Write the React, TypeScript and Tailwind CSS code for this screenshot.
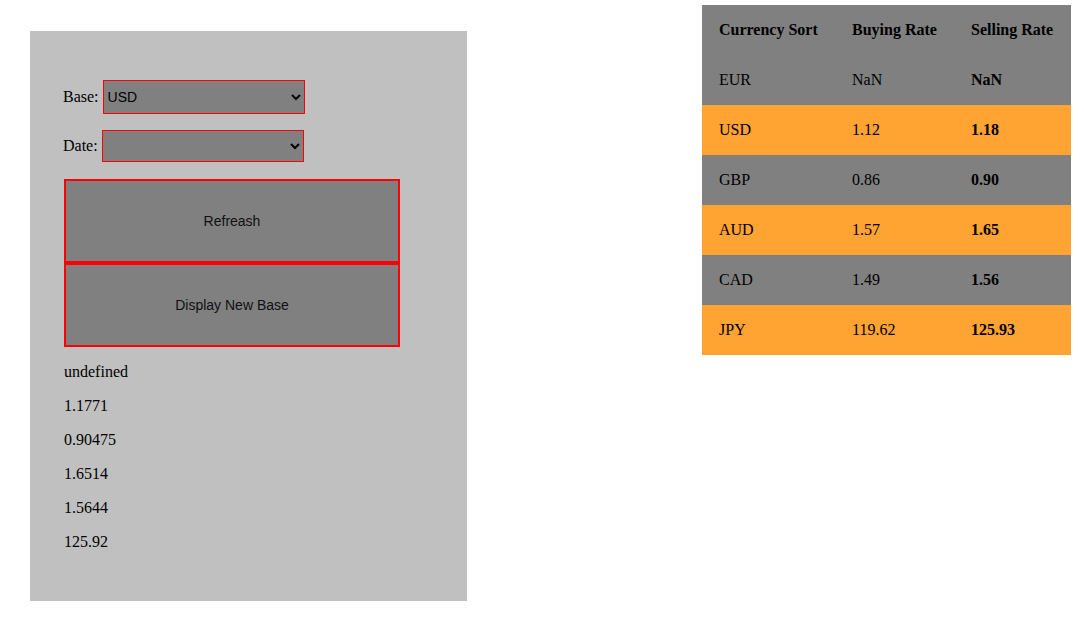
const rows = [
  { code: "EUR", buy: "NaN", sell: "NaN" },
  { code: "USD", buy: "1.12", sell: "1.18" },
  { code: "GBP", buy: "0.86", sell: "0.90" },
  { code: "AUD", buy: "1.57", sell: "1.65" },
  { code: "CAD", buy: "1.49", sell: "1.56" },
  { code: "JPY", buy: "119.62", sell: "125.93" },
];

const rates = ["undefined", "1.1771", "0.90475", "1.6514", "1.5644", "125.92"];

export default function App() {
  return (
    <div className="flex items-start w-[1084px] h-[626px] bg-white text-black text-[16px] font-['Liberation_Serif',serif]">
      {/* Converter panel */}
      <div className="ml-[30px] mt-[31px] w-[437px] h-[570px] bg-[#c0c0c0] pl-[33px] pt-[49px]">
        <div className="flex items-center h-[34px]">
          <span className="mr-[4px]">Base:</span>
          <select
            defaultValue="USD"
            className="w-[202px] h-[34px] bg-[#808080] border border-[#ff0000] text-[14px] text-black font-['Liberation_Sans',sans-serif]"
          >
            <option>USD</option>
            <option>EUR</option>
          </select>
        </div>
        <div className="flex items-center h-[32px] mt-[16px]">
          <span className="mr-[4px]">Date:</span>
          <select className="w-[202px] h-[32px] bg-[#808080] border border-[#ff0000] text-[14px] font-['Liberation_Sans',sans-serif]">
            <option></option>
          </select>
        </div>

        <div className="flex flex-col mt-[17px] ml-[1px] w-[336px]">
          <button className="h-[84px] bg-[#808080] border-2 border-[#ff0000] text-[14px] text-[#111] font-['Liberation_Sans',sans-serif]">
            Refreash
          </button>
          <button className="h-[84px] bg-[#808080] border-2 border-[#ff0000] text-[14px] text-[#111] font-['Liberation_Sans',sans-serif]">
            Display New Base
          </button>
        </div>

        <div className="ml-[1px] mt-[16px]">
          {rates.map((r) => (
            <p key={r} className="mb-[16px] leading-[18px]">
              {r}
            </p>
          ))}
        </div>
      </div>

      {/* Rates table */}
      <table className="ml-[235px] mt-[5px] w-[369px] border-collapse">
        <thead>
          <tr className="bg-[#808080] h-[50px]">
            <th className="w-[133px] pl-[17px] text-left font-bold">Currency Sort</th>
            <th className="w-[119px] pl-[17px] text-left font-bold">Buying Rate</th>
            <th className="pl-[17px] text-left font-bold">Selling Rate</th>
          </tr>
        </thead>
        <tbody>
          {rows.map((row, i) => (
            <tr key={row.code} className={i % 2 === 0 ? "bg-[#808080] h-[50px]" : "bg-[#ffa333] h-[50px]"}>
              <td className="pl-[17px]">{row.code}</td>
              <td className="pl-[17px]">{row.buy}</td>
              <td className="pl-[17px] font-bold">{row.sell}</td>
            </tr>
          ))}
        </tbody>
      </table>
    </div>
  );
}
